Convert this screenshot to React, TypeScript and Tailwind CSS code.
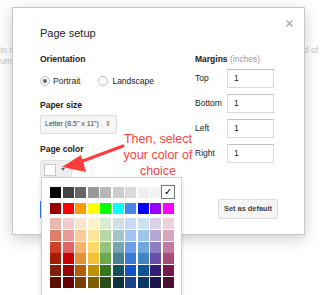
import React from "react";

const greys = ["#000000", "#434343", "#666666", "#999999", "#b7b7b7", "#cccccc", "#d9d9d9", "#efefef", "#f3f3f3", "#ffffff"];
const brights = ["#980000", "#ff0000", "#ff9900", "#ffff00", "#00ff00", "#00ffff", "#4a86e8", "#0000ff", "#9900ff", "#ff00ff"];
const shades = [
  ["#e6b8af", "#f4cccc", "#fce5cd", "#fff2cc", "#d9ead3", "#d0e0e3", "#c9daf8", "#cfe2f3", "#d9d2e9", "#ead1dc"],
  ["#dd7e6b", "#ea9999", "#f9cb9c", "#ffe599", "#b6d7a8", "#a2c4c9", "#a4c2f4", "#9fc5e8", "#b4a7d6", "#d5a6bd"],
  ["#cc4125", "#e06666", "#f6b26b", "#ffd966", "#93c47d", "#76a5af", "#6d9eeb", "#6fa8dc", "#8e7cc3", "#c27ba0"],
  ["#a61c00", "#cc0000", "#e69138", "#f1c232", "#6aa84f", "#45818e", "#3c78d8", "#3d85c6", "#674ea7", "#a64d79"],
  ["#85200c", "#990000", "#b45f06", "#bf9000", "#38761d", "#134f5c", "#1155cc", "#0b5394", "#351c75", "#741b47"],
  ["#5b0f00", "#660000", "#783f04", "#7f6000", "#274e13", "#0c343d", "#1c4587", "#073763", "#20124d", "#4c1130"],
];

function Swatch({ c }: { c: string }) {
  return <div className="w-[11px] h-[11px]" style={{ backgroundColor: c }} />;
}

function MarginRow({ label }: { label: string }) {
  return (
    <div className="flex items-center h-[19px]">
      <div className="w-[32px] text-[8.5px] text-[#222]">{label}</div>
      <div className="w-[47px] h-[19px] border border-[#d9d9d9] border-t-[#c0c0c0] bg-white flex items-center pl-[6px] text-[8.5px] text-[#222]">
        1
      </div>
    </div>
  );
}

export default function App() {
  return (
    <div
      className="relative w-[320px] h-[295px] overflow-hidden bg-white"
      style={{ fontFamily: '"Liberation Sans", Arial, sans-serif' }}
    >
      {/* background document */}
      <div className="pt-[45px] text-[8.5px] leading-[11px] text-[#c4c4c4]">
        <div className="flex justify-between pr-[2px]">
          <span>to the</span>
          <span>d of</span>
        </div>
        <div>umn</div>
      </div>

      {/* dialog */}
      <div className="absolute left-[12px] top-[7px] w-[293px] h-[228px] bg-white border border-[#c6c6c6] shadow-[0_4px_14px_rgba(0,0,0,0.2)] pl-[27px] pt-[19px]">
        <svg className="absolute right-[11px] top-[12px]" width="7" height="7" viewBox="0 0 7 7">
          <path d="M0.5 0.5 L6.5 6.5 M6.5 0.5 L0.5 6.5" stroke="#a8a8a8" strokeWidth="1.3" />
        </svg>
        <div className="text-[11px] leading-[13px] text-[#222]">Page setup</div>
        <div className="flex mt-[14px]">
          <div className="w-[155px]">
            <div className="text-[8.5px] leading-[11px] font-bold text-[#222]">Orientation</div>
            <div className="flex items-center mt-[10px] h-[12px] text-[8.5px] text-[#222]">
              <div className="w-[10px] h-[10px] rounded-full border border-[#c2c2c2] bg-[#f6f6f6] flex items-center justify-center">
                <div className="w-[4px] h-[4px] rounded-full bg-[#666]" />
              </div>
              <span className="ml-[3px]">Portrait</span>
              <div className="ml-[18px] w-[10px] h-[10px] rounded-full border border-[#c2c2c2] bg-white" />
              <span className="ml-[4px]">Landscape</span>
            </div>
            <div className="text-[8.5px] leading-[11px] font-bold text-[#222] mt-[13px]">Paper size</div>
            <div className="mt-[4px] w-[77px] h-[19px] border border-[#dcdcdc] bg-[#f5f5f5] rounded-[2px] flex items-center pl-[4px] text-[7px] text-[#444]">
              <span>Letter (8.5" x 11")</span>
              <span className="ml-[6px] text-[7px] text-[#666]">⇕</span>
            </div>
            <div className="text-[8.5px] leading-[11px] font-bold text-[#222] mt-[10px]">Page color</div>
            <div className="mt-[5px] w-[32px] h-[19px] bg-[#eeeeee] border border-[#e2e2e2] rounded-[2px] flex items-center pl-[3px]">
              <div className="w-[12px] h-[12px] bg-white border border-[#c8c8c8]" />
              <div className="ml-[5px] w-0 h-0 border-l-[2.5px] border-r-[2.5px] border-t-[3px] border-l-transparent border-r-transparent border-t-[#666]" />
            </div>
          </div>
          <div>
            <div className="text-[8.5px] leading-[11px] text-[#222]">
              <span className="font-bold">Margins</span> <span className="text-[#999]">(inches)</span>
            </div>
            <div className="mt-[4px] flex flex-col gap-[6px]">
              <MarginRow label="Top" />
              <MarginRow label="Bottom" />
              <MarginRow label="Left" />
              <MarginRow label="Right" />
            </div>
          </div>
        </div>
        <div className="flex items-center mt-[20px]">
          <div className="w-[52px] h-[19px] bg-[#4d90fe] border border-[#3079ed] rounded-[2px]" />
          <div className="ml-[126px] w-[60px] h-[20px] bg-[#f5f5f5] border border-[#dcdcdc] rounded-[2px] flex items-center justify-center text-[7.4px] font-bold text-[#444]">
            Set as default
          </div>
        </div>
      </div>

      {/* palette dropdown */}
      <div className="absolute left-[41px] top-[177px] w-[141px] h-[130px] bg-white border border-[#d0d0d0] shadow-[0_2px_4px_rgba(0,0,0,0.15)] pl-[8px] pt-[9px]">
        <div className="grid grid-cols-[repeat(10,11px)] gap-x-[1.5px]">
          {greys.map((c, i) =>
            i === 9 ? (
              <div key={i} className="relative w-[11px] h-[11px]">
                <div className="absolute left-[-1.5px] top-[-2px] w-[14px] h-[14px] bg-white border border-[#777] flex items-center justify-center text-[10px] leading-none text-black">
                  ✓
                </div>
              </div>
            ) : (
              <Swatch key={i} c={c} />
            )
          )}
        </div>
        <div className="grid grid-cols-[repeat(10,11px)] gap-x-[1.5px] mt-[5px]">
          {brights.map((c, i) => (
            <Swatch key={i} c={c} />
          ))}
        </div>
        <div className="grid grid-cols-[repeat(10,11px)] gap-x-[1.5px] gap-y-[0.8px] mt-[4px]">
          {shades.flat().map((c, i) => (
            <Swatch key={i} c={c} />
          ))}
        </div>
      </div>

      {/* annotation */}
      <div className="absolute left-[118px] top-[131px] w-[80px] text-center text-[12.5px] leading-[16px] text-[#ff4040]">
        Then, select
        <br />
        your color of
        <br />
        choice
      </div>
      <svg className="absolute left-0 top-0" width="320" height="295" viewBox="0 0 320 295">
        <line x1="123" y1="146" x2="80" y2="162" stroke="#ff3b3b" strokeWidth="3" strokeLinecap="round" />
        <polygon points="62,167 81,155 86,172" fill="#ff3b3b" />
      </svg>
    </div>
  );
}
